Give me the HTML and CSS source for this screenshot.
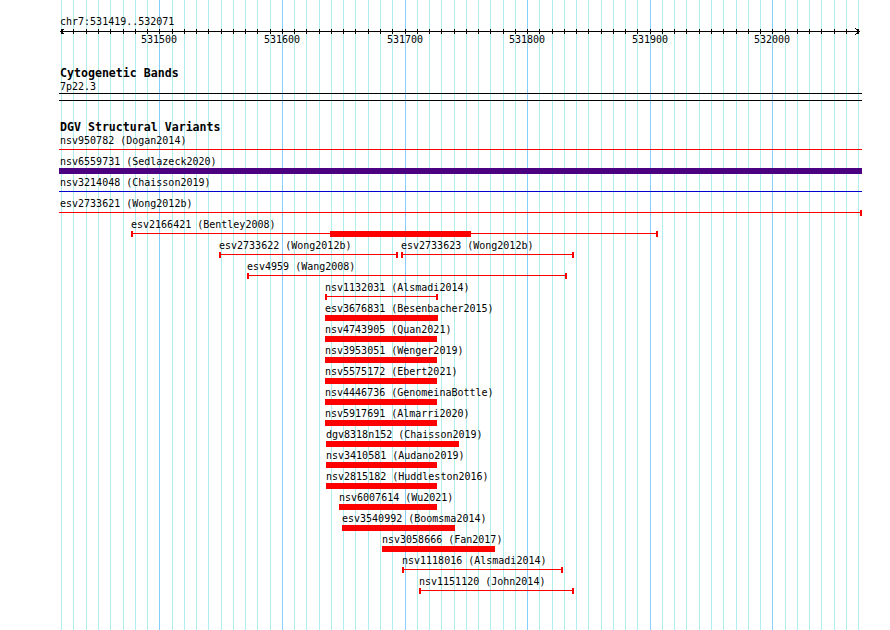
FILE: index.html
```html
<!DOCTYPE html>
<html lang="en">
<head>
  <meta charset="UTF-8">
  <meta name="viewport" content="width=device-width, initial-scale=1">
  <title>chr7:531419..532071</title>
  <link rel="stylesheet" href="styles.css">
</head>
<body>
  <div class="panel">
    <div class="grid" id="grid"></div>

    <div class="ruler">
      <div class="ruler-label">chr7:531419..532071</div>
      <div class="axis" id="axis">
        <svg class="arrow arrow-left" width="5" height="7" shape-rendering="crispEdges">
          <polyline points="4.5,0.5 0.5,3.5 4.5,6.5" fill="none" stroke="#000" stroke-width="1"/>
        </svg>
        <svg class="arrow arrow-right" width="5" height="7" shape-rendering="crispEdges">
          <polyline points="0.5,0.5 4.5,3.5 0.5,6.5" fill="none" stroke="#000" stroke-width="1"/>
        </svg>
      </div>
    </div>

    <div class="track">
      <h3 class="track-title">Cytogenetic Bands</h3>
      <div class="row full">
        <div class="label">7p22.3</div>
        <div class="glyph band"></div>
      </div>
    </div>

    <div class="track dgv">
      <h3 class="track-title">DGV Structural Variants</h3>

      <!-- variants covering the whole view -->
      <div class="row full">
        <div class="label">nsv950782 (Dogan2014)</div>
        <div class="glyph line red"></div>
      </div>
      <div class="row full">
        <div class="label">nsv6559731 (Sedlazeck2020)</div>
        <div class="glyph bar indigo"></div>
      </div>
      <div class="row full">
        <div class="label">nsv3214048 (Chaisson2019)</div>
        <div class="glyph line blue"></div>
      </div>
      <div class="row full">
        <div class="label">esv2733621 (Wong2012b)</div>
        <div class="glyph line cap-end red"></div>
      </div>

      <!-- variants inside the view -->
      <div class="row">
        <div class="feature" style="left:71px;width:527px">
          <div class="label">esv2166421 (Bentley2008)</div>
          <div class="glyph line capped red"><div class="thick" style="left:199px;width:141px"></div></div>
        </div>
      </div>
      <div class="row">
        <div class="feature" style="left:159px;width:179px">
          <div class="label">esv2733622 (Wong2012b)</div>
          <div class="glyph line capped red"></div>
        </div>
        <div class="feature" style="left:341px;width:173px">
          <div class="label">esv2733623 (Wong2012b)</div>
          <div class="glyph line capped red"></div>
        </div>
      </div>
      <div class="row">
        <div class="feature" style="left:187px;width:320px">
          <div class="label">esv4959 (Wang2008)</div>
          <div class="glyph line capped red"></div>
        </div>
      </div>
      <div class="row">
        <div class="feature" style="left:265px;width:113px">
          <div class="label">nsv1132031 (Alsmadi2014)</div>
          <div class="glyph line capped red"></div>
        </div>
      </div>
      <div class="row">
        <div class="feature" style="left:265px;width:113px">
          <div class="label">esv3676831 (Besenbacher2015)</div>
          <div class="glyph bar red"></div>
        </div>
      </div>
      <div class="row">
        <div class="feature" style="left:265px;width:112px">
          <div class="label">nsv4743905 (Quan2021)</div>
          <div class="glyph bar red"></div>
        </div>
      </div>
      <div class="row">
        <div class="feature" style="left:265px;width:112px">
          <div class="label">nsv3953051 (Wenger2019)</div>
          <div class="glyph bar red"></div>
        </div>
      </div>
      <div class="row">
        <div class="feature" style="left:265px;width:112px">
          <div class="label">nsv5575172 (Ebert2021)</div>
          <div class="glyph bar red"></div>
        </div>
      </div>
      <div class="row">
        <div class="feature" style="left:265px;width:112px">
          <div class="label">nsv4446736 (GenomeinaBottle)</div>
          <div class="glyph bar red"></div>
        </div>
      </div>
      <div class="row">
        <div class="feature" style="left:265px;width:112px">
          <div class="label">nsv5917691 (Almarri2020)</div>
          <div class="glyph bar red"></div>
        </div>
      </div>
      <div class="row">
        <div class="feature" style="left:266px;width:133px">
          <div class="label">dgv8318n152 (Chaisson2019)</div>
          <div class="glyph bar red"></div>
        </div>
      </div>
      <div class="row">
        <div class="feature" style="left:266px;width:111px">
          <div class="label">nsv3410581 (Audano2019)</div>
          <div class="glyph bar red"></div>
        </div>
      </div>
      <div class="row">
        <div class="feature" style="left:266px;width:111px">
          <div class="label">nsv2815182 (Huddleston2016)</div>
          <div class="glyph bar red"></div>
        </div>
      </div>
      <div class="row">
        <div class="feature" style="left:279px;width:98px">
          <div class="label">nsv6007614 (Wu2021)</div>
          <div class="glyph bar red"></div>
        </div>
      </div>
      <div class="row">
        <div class="feature" style="left:282px;width:113px">
          <div class="label">esv3540992 (Boomsma2014)</div>
          <div class="glyph bar red"></div>
        </div>
      </div>
      <div class="row">
        <div class="feature" style="left:322px;width:113px">
          <div class="label">nsv3058666 (Fan2017)</div>
          <div class="glyph bar red"></div>
        </div>
      </div>
      <div class="row">
        <div class="feature" style="left:342px;width:161px">
          <div class="label">nsv1118016 (Alsmadi2014)</div>
          <div class="glyph line capped red"></div>
        </div>
      </div>
      <div class="row">
        <div class="feature" style="left:359px;width:155px">
          <div class="label">nsv1151120 (John2014)</div>
          <div class="glyph line capped red"></div>
        </div>
      </div>
    </div>
  </div>

  <script src="script.js"></script>
</body>
</html>
```

FILE: styles.css
```css
body {
  margin: 0;
  background: #fff;
  color: #000;
  font-family: "DejaVu Sans Mono", monospace;
  font-size: 10px;
}

.panel {
  position: relative;
  z-index: 0;
  margin-left: 60px;
  width: 800px;
  min-height: 630px;
}

/* background grid, one line every 10 bp */
.grid {
  position: absolute;
  top: 0;
  bottom: 0;
  left: 0;
  right: 0;
  z-index: -1;
}

.grid-line {
  position: absolute;
  top: 0;
  bottom: 0;
  width: 1px;
  background: #afeeee;
}

.grid-line.major {
  background: #87cefa;
}

/* ruler */
.ruler {
  height: 67px;
}

.ruler-label {
  padding-top: 15px;
  line-height: 13px;
}

.axis {
  position: relative;
  height: 5px;
  margin-top: 1px;
}

.axis::before {
  content: '';
  position: absolute;
  top: 2px;
  left: 0;
  width: 800px;
  height: 1px;
  background: #000;
}

.tick {
  position: absolute;
  top: 0;
  width: 1px;
  height: 5px;
  background: #000;
}

.tick-label {
  position: absolute;
  top: 4px;
  line-height: 13px;
  transform: translateX(-50%);
}

.arrow {
  position: absolute;
  top: -1px;
  display: block;
}

.arrow-left {
  left: 0;
}

.arrow-right {
  left: 795px;
}

/* tracks */
.track-title {
  margin: 0;
  font-size: 11.6px;
  font-weight: bold;
  line-height: 13px;
}

.dgv {
  margin-top: 20px;
}

.row {
  position: relative;
  height: 21px;
}

.label {
  line-height: 13px;
  white-space: nowrap;
}

.feature {
  position: absolute;
  top: 0;
}

.glyph {
  position: relative;
  height: 6px;
}

.full .glyph {
  margin: 0 -2px 0 -1px;
}

.glyph.band {
  height: 8px;
  border-top: 1px solid #000;
  border-bottom: 1px solid #000;
  box-sizing: border-box;
}

.glyph.line {
  background: linear-gradient(currentColor, currentColor) 0 2px / 100% 1px no-repeat;
}

.glyph.bar {
  background: currentColor;
}

.capped::before,
.capped::after,
.cap-end::after {
  content: '';
  position: absolute;
  top: 0;
  width: 2px;
  height: 6px;
  background: currentColor;
}

.capped::before {
  left: 0;
}

.capped::after,
.cap-end::after {
  right: 0;
}

.thick {
  position: absolute;
  top: 0;
  height: 6px;
  background: currentColor;
}

.red {
  color: #f00;
}

.indigo {
  color: #4b0082;
}

.blue {
  color: #0000cd;
}
```

FILE: script.js
```js
// grid lines, ticks and numbers for the visible range
const START = 531419;
const END = 532071;
const PX_PER_BP = 1.226;

function bpToX(bp) {
  return Math.round((bp - START) * PX_PER_BP);
}

const grid = document.getElementById('grid');
const axis = document.getElementById('axis');

for (let bp = Math.ceil(START / 10) * 10; bp <= END; bp += 10) {
  const x = bpToX(bp);
  const major = bp % 100 === 0;

  const line = document.createElement('div');
  line.className = major ? 'grid-line major' : 'grid-line';
  line.style.left = x + 'px';
  grid.appendChild(line);

  const tick = document.createElement('div');
  tick.className = 'tick';
  tick.style.left = x + 'px';
  axis.appendChild(tick);

  if (major) {
    const label = document.createElement('span');
    label.className = 'tick-label';
    label.style.left = x + 'px';
    label.textContent = bp;
    axis.appendChild(label);
  }
}
```
